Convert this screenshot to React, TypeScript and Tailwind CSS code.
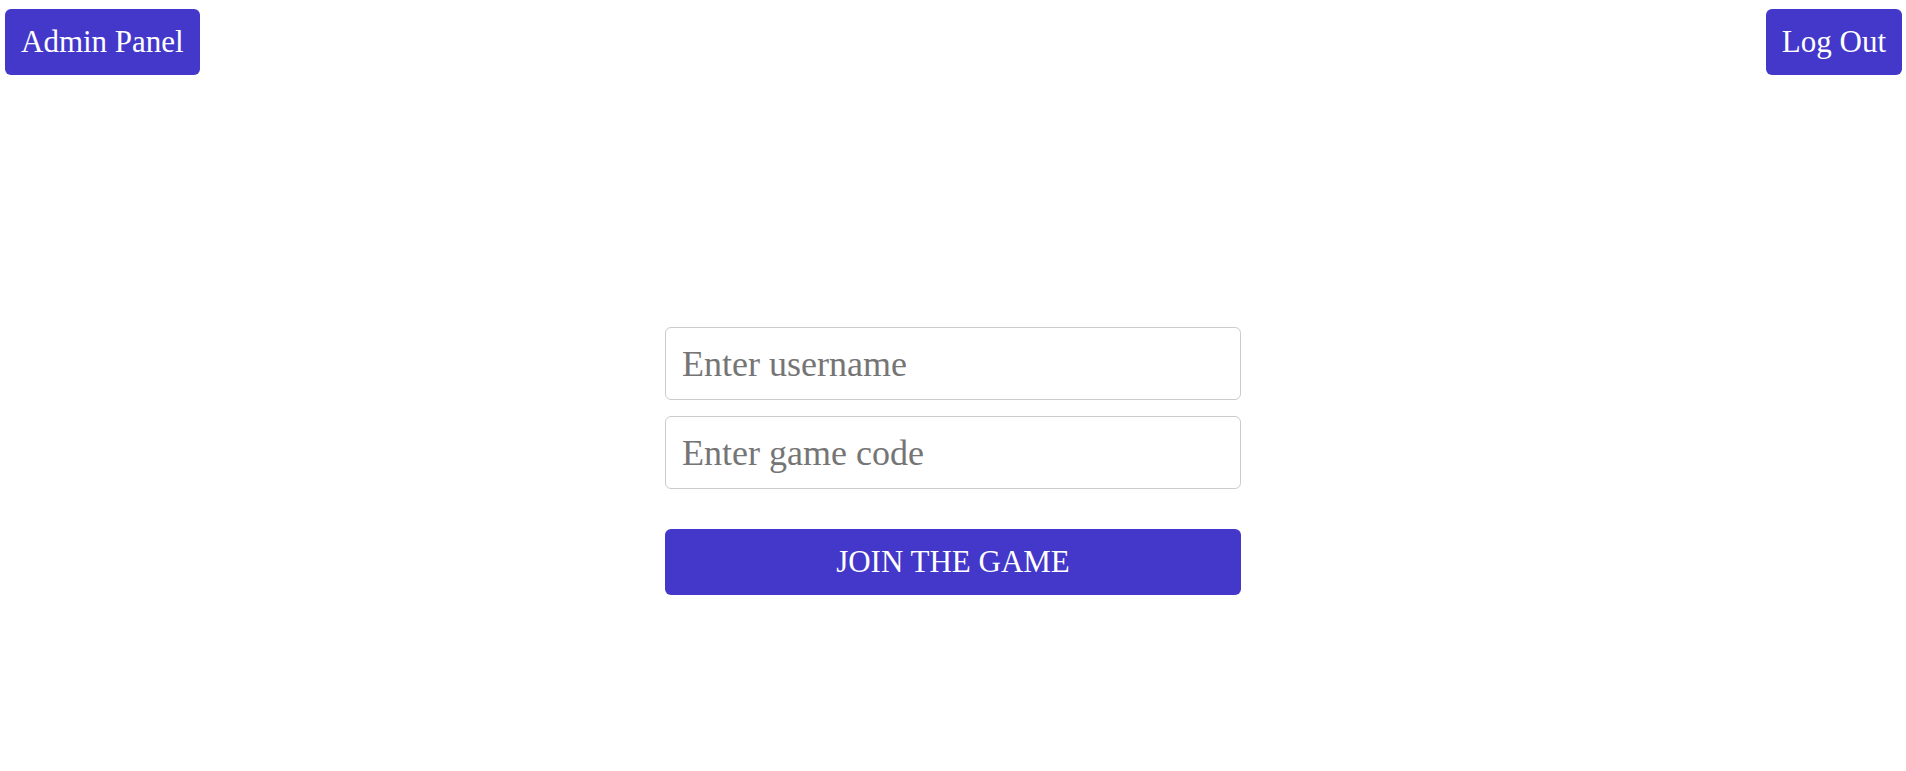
import React from "react";

export default function App() {
  const btn = "bg-[#4338ca] text-white rounded-[6px] px-4 py-[15px] text-[31px] leading-[36px]";

  return (
    <div className="min-h-[771px] bg-white font-['Liberation_Serif',serif]">
      <div className="flex justify-between items-start pt-[9px] pl-[5px] pr-[4px]">
        <button className={btn}>Admin Panel</button>
        <button className={btn}>Log Out</button>
      </div>

      <div className="flex justify-center mt-[252px]">
        <form className="w-[576px] flex flex-col" onSubmit={(e) => e.preventDefault()}>
          <input
            type="text"
            placeholder="Enter username"
            className="h-[73px] border border-[#cccccc] rounded-[6px] px-4 text-[36px] placeholder:text-[#757575] outline-none"
          />
          <input
            type="text"
            placeholder="Enter game code"
            className="mt-4 h-[73px] border border-[#cccccc] rounded-[6px] px-4 text-[36px] placeholder:text-[#757575] outline-none"
          />
          <button type="submit" className="mt-10 h-[66px] bg-[#4338ca] text-white rounded-[6px] text-[31px] uppercase">
            Join the game
          </button>
        </form>
      </div>
    </div>
  );
}
